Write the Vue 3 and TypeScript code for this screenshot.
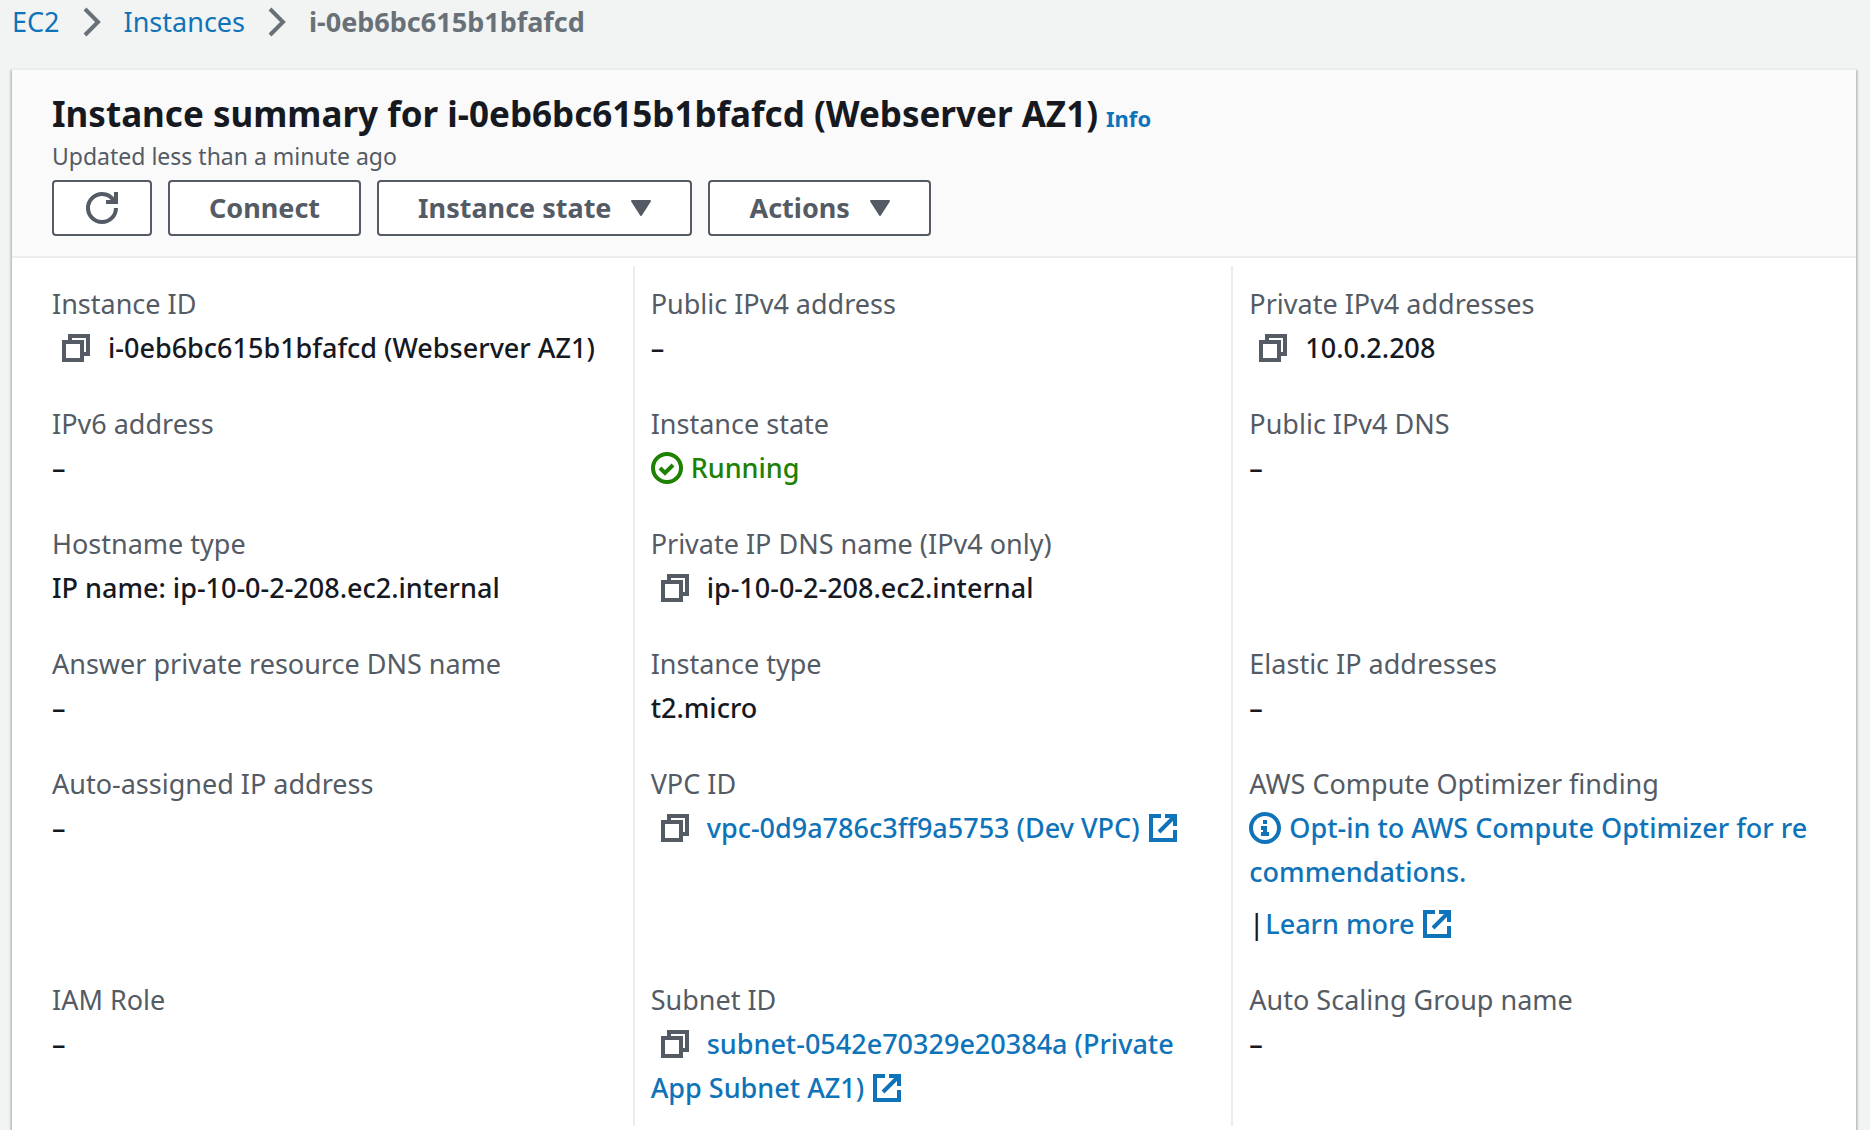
<script setup lang="ts">
interface Item {
  label: string
  kind: 'text' | 'copy' | 'status' | 'copylink' | 'optin' | 'empty'
  value?: string
}

const items: Item[] = [
  { label: 'Instance ID', kind: 'copy', value: 'i-0eb6bc615b1bfafcd (Webserver AZ1)' },
  { label: 'Public IPv4 address', kind: 'text', value: '–' },
  { label: 'Private IPv4 addresses', kind: 'copy', value: '10.0.2.208' },
  { label: 'IPv6 address', kind: 'text', value: '–' },
  { label: 'Instance state', kind: 'status', value: 'Running' },
  { label: 'Public IPv4 DNS', kind: 'text', value: '–' },
  { label: 'Hostname type', kind: 'text', value: 'IP name: ip-10-0-2-208.ec2.internal' },
  { label: 'Private IP DNS name (IPv4 only)', kind: 'copy', value: 'ip-10-0-2-208.ec2.internal' },
  { label: '', kind: 'empty' },
  { label: 'Answer private resource DNS name', kind: 'text', value: '–' },
  { label: 'Instance type', kind: 'text', value: 't2.micro' },
  { label: 'Elastic IP addresses', kind: 'text', value: '–' },
  { label: 'Auto-assigned IP address', kind: 'text', value: '–' },
  { label: 'VPC ID', kind: 'copylink', value: 'vpc-0d9a786c3ff9a5753 (Dev VPC)' },
  { label: 'AWS Compute Optimizer finding', kind: 'optin' },
  { label: 'IAM Role', kind: 'text', value: '–' },
  { label: 'Subnet ID', kind: 'copylink', value: 'subnet-0542e70329e20384a (Private App Subnet AZ1)' },
  { label: 'Auto Scaling Group name', kind: 'text', value: '–' },
]
</script>

<template>
  <div class="page">
    <nav class="crumbs" aria-label="Breadcrumbs">
      <a href="#">EC2</a>
      <svg class="chevron" viewBox="0 0 18 30" aria-hidden="true"><path d="M2 2l13 13L2 28" /></svg>
      <a href="#">Instances</a>
      <svg class="chevron" viewBox="0 0 18 30" aria-hidden="true"><path d="M2 2l13 13L2 28" /></svg>
      <span class="current">i-0eb6bc615b1bfafcd</span>
    </nav>

    <main class="card">
      <header class="card-header">
        <div class="title-row">
          <h1>Instance summary for i-0eb6bc615b1bfafcd (Webserver AZ1)</h1>
          <a class="info" href="#">Info</a>
        </div>
        <p class="updated">Updated less than a minute ago</p>
        <div class="actions">
          <button class="btn btn-icon" type="button" aria-label="Refresh">
            <svg class="icon" viewBox="0 0 16 16" aria-hidden="true">
              <path d="M15 8A7 7 0 1 1 8 1c2.6 0 4.8 1.4 6 3.6" />
              <path d="M15 0v5H10" />
            </svg>
          </button>
          <button class="btn" type="button">Connect</button>
          <button class="btn" type="button">
            Instance state
            <svg class="caret" viewBox="0 0 20 16" aria-hidden="true"><path d="M1 1h18L10 15z" /></svg>
          </button>
          <button class="btn" type="button">
            Actions
            <svg class="caret" viewBox="0 0 20 16" aria-hidden="true"><path d="M1 1h18L10 15z" /></svg>
          </button>
        </div>
      </header>

      <dl class="details">
        <div v-for="(item, i) in items" :key="i" class="cell">
          <dt v-if="item.label">{{ item.label }}</dt>
          <dd v-if="item.kind === 'text'">{{ item.value }}</dd>
          <dd v-else-if="item.kind === 'status'" class="running">
            <svg class="icon lead" viewBox="0 0 16 16" aria-hidden="true">
              <circle cx="8" cy="8" r="7" />
              <path d="M4.5 8l2.5 2.5 4-4" />
            </svg>{{ item.value }}
          </dd>
          <dd v-else-if="item.kind === 'copy' || item.kind === 'copylink'">
            <button class="copy" type="button" :aria-label="'Copy ' + item.label">
              <svg class="icon" viewBox="0 0 16 16" aria-hidden="true">
                <path d="M2 5h9v9H2z" />
                <path d="M5 4V2h9v9h-2" />
              </svg>
            </button><a v-if="item.kind === 'copylink'" href="#">{{ item.value }}&nbsp;<svg class="icon" viewBox="0 0 16 16" aria-hidden="true">
              <path d="M7 2H2v12h12V9" />
              <path d="M9 2h5v5M14 2l-8 8" />
            </svg></a><template v-else>{{ item.value }}</template>
          </dd>
          <dd v-else-if="item.kind === 'optin'">
            <a href="#"><svg class="icon lead" viewBox="0 0 16 16" aria-hidden="true">
              <circle cx="8" cy="8" r="7" />
              <path class="solid" d="M7 4h2v2H7zM6 7h3v3h1v2H6v-2h1V9H6z" />
            </svg>Opt-in to AWS Compute Optimizer for re<br>commendations.</a>
            <div class="more">
              <span>|</span>
              <a href="#">Learn more&nbsp;<svg class="icon" viewBox="0 0 16 16" aria-hidden="true">
                <path d="M7 2H2v12h12V9" />
                <path d="M9 2h5v5M14 2l-8 8" />
              </svg></a>
            </div>
          </dd>
        </div>
      </dl>
    </main>
  </div>
</template>

<style>
body {
  margin: 0;
  background: #f2f3f3;
}
</style>

<style scoped>
.page {
  box-sizing: border-box;
  display: flex;
  flex-direction: column;
  min-height: 100vh;
  padding: 0 14px 0 12px;
  font-family: "Noto Sans", "Open Sans", sans-serif;
  font-size: 27px;
  line-height: 44px;
  color: #16191f;
}
a {
  color: #0f73b9;
  text-decoration: none;
}
.crumbs {
  display: flex;
  align-items: center;
  height: 44px;
  margin-bottom: 24px;
}
.chevron {
  width: 18px;
  height: 30px;
  margin: 0 23px;
  fill: none;
  stroke: #687078;
  stroke-width: 4;
}
.current {
  font-weight: 700;
  color: #687078;
}
.card {
  flex: 1;
  background: #fff;
  border-top: 2px solid #eaeded;
  box-shadow:
    0 2px 2px rgba(0, 28, 36, 0.3),
    2px 2px 2px rgba(0, 28, 36, 0.15),
    -2px 2px 2px rgba(0, 28, 36, 0.15);
}
.card-header {
  padding: 22px 40px 20px;
  background: #fafafa;
  border-bottom: 2px solid #eaeded;
}
.title-row {
  display: flex;
  align-items: baseline;
  gap: 8px;
}
h1 {
  margin: 0;
  font-size: 35px;
  line-height: 44px;
  font-weight: 700;
}
.info {
  font-size: 22px;
  font-weight: 700;
}
.updated {
  margin: 0 0 8px;
  font-size: 23px;
  line-height: 32px;
  color: #545b64;
}
.actions {
  display: flex;
  gap: 16px;
}
.btn {
  box-sizing: border-box;
  display: flex;
  align-items: center;
  justify-content: center;
  gap: 20px;
  height: 56px;
  padding: 0 39px;
  border: 2px solid #545b64;
  border-radius: 4px;
  background: #fff;
  color: #545b64;
  font: inherit;
  font-weight: 700;
}
.btn-icon {
  padding: 0 32px;
}
.icon {
  width: 32px;
  height: 32px;
  fill: none;
  stroke: currentColor;
  stroke-width: 2;
  vertical-align: -6px;
}
.icon .solid {
  fill: currentColor;
  stroke: none;
}
.lead {
  margin-right: 8px;
}
.caret {
  width: 20px;
  height: 16px;
  fill: currentColor;
  stroke: currentColor;
  stroke-width: 2;
  stroke-linejoin: round;
}
.details {
  display: grid;
  grid-template-columns: repeat(3, 1fr);
  margin: 8px 24px 0;
}
.cell {
  padding: 0 16px 32px;
  border-right: 2px solid #eaeded;
}
.cell:nth-child(3n) {
  border-right: 0;
}
.cell:nth-child(-n + 3) {
  padding-top: 16px;
}
.cell:nth-last-child(-n + 3) {
  padding-bottom: 16px;
}
dt {
  color: #545b64;
}
dd {
  margin: 0;
  font-weight: 500;
}
.running {
  color: #1d8102;
}
.copy {
  margin: 0 16px 0 8px;
  padding: 0;
  border: 0;
  background: none;
  color: #545b64;
  font: inherit;
  line-height: 32px;
}
.more {
  display: flex;
  gap: 1px;
  margin-top: 8px;
}
</style>
